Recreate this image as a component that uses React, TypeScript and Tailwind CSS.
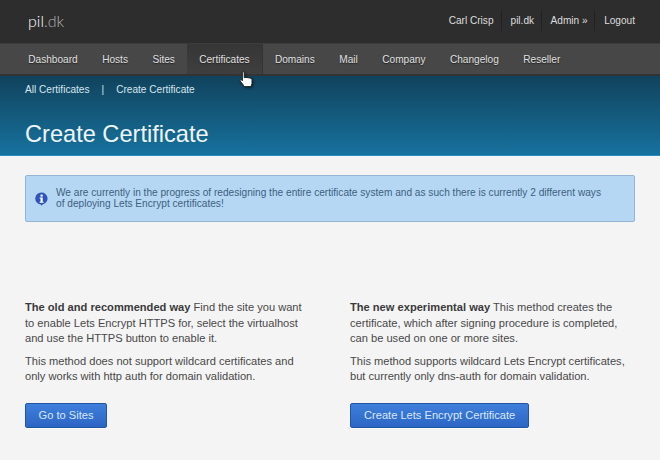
const MAIN_NAV = ["Dashboard", "Hosts", "Sites", "Certificates", "Domains", "Mail", "Company", "Changelog", "Reseller"];
const USER_NAV = ["Carl Crisp", "pil.dk", "Admin »", "Logout"];

function HandCursor() {
  return (
    <svg className="absolute left-[239px] top-[71px] drop-shadow-[1px_1px_1px_rgba(0,0,0,0.5)]" width="15" height="17" viewBox="0 0 15 17">
      <path
        d="M3.4 1.6C3.4.5 5.2.5 5.2 1.6V6.6L7 6.4 9 6.7 11 7 13 7.8V12.4L12 15.6H5L4 13.6 1.2 10C.8 9 2 8.2 2.9 9.1L3.4 9.8Z"
        fill="#fff"
        stroke="#1a1a1a"
        strokeWidth="0.9"
        strokeLinejoin="round"
      />
    </svg>
  );
}

function InfoIcon() {
  return (
    <svg width="13" height="14" viewBox="0 0 13 14" className="shrink-0">
      <path d="M6.5.5a6 6 0 0 1 1.6 11.8L6 13.8v-1.3A6 6 0 0 1 6.5.5Z" fill="#2f55b8" />
      <rect x="5.5" y="2.6" width="2.2" height="2" fill="#fff" />
      <path d="M4.6 5.6h3.1v4.2h.9v1H4.6v-1h.9V6.6h-.9Z" fill="#fff" />
    </svg>
  );
}

export default function App() {
  return (
    <div className="relative h-[460px] w-[660px] overflow-hidden bg-[#f4f4f4] font-['Liberation_Sans',Arial,sans-serif] text-[11.12px] text-[#484848]">
      <header className="flex h-[43px] items-center justify-between bg-[#2d2d2d] pb-[2px] pl-[28px] pr-[25px]">
        <div className="font-['Lato',sans-serif] text-[16px] font-light leading-none text-[#b4b4b4]">
          <span className="text-[#ffffff]">pil</span>.dk
        </div>
        <nav className="flex items-center text-[10.1px] text-[#dddddd]">
          {USER_NAV.map((item, i) => (
            <span
              key={item}
              className={
                i === 0
                  ? "flex h-[20px] items-center pr-[7px]"
                  : "flex h-[20px] items-center border-l border-[#222] pl-[9px] pr-[6.5px] last:pr-0"
              }
            >
              {item}
            </span>
          ))}
        </nav>
      </header>

      <nav className="flex h-[33px] items-stretch border-t border-[#3c3c3c] border-b-2 border-b-[#333] bg-[#474747] pl-[16px] pt-[1px] text-[10.1px] text-[#e0e0e0] [text-shadow:0_1px_1px_#222]">
        {MAIN_NAV.map((item) => (
          <span
            key={item}
            className={
              item === "Certificates"
                ? "-mt-[1px] flex items-center border-r border-[#333] bg-gradient-to-b from-[#363636] to-[#3f3f3f] px-[12px] pt-[1px]"
                : "flex items-center px-[12.25px]"
            }
          >
            {item}
          </span>
        ))}
      </nav>

      <section className="h-[80px] border-b border-[#2b8fc0] bg-gradient-to-b from-[#10435d] to-[#17729f] pl-[25px] text-white">
        <div className="flex h-[27px] items-center text-[10.1px] text-[#d7e6ee]">
          <span>All Certificates</span>
          <span className="mx-[12px]">|</span>
          <span>Create Certificate</span>
        </div>
        <h1 className="mt-[17px] text-[23.6px] leading-[28px] text-[#eef5f9]">Create Certificate</h1>
      </section>

      <main className="px-[25px] pt-[19px]">
        <div className="flex h-[47px] items-center gap-[8px] rounded-[2px] border border-[#93b5d3] bg-[#b5d7f3] pl-[9px] pr-[28px] text-[10.14px] leading-[10.5px] text-[#3d5f80]">
          <InfoIcon />
          <p>
            We are currently in the progress of redesigning the entire certificate system and as such there is currently 2 different ways of deploying Lets Encrypt certificates!
          </p>
        </div>

        <div className="mt-[78px] grid grid-cols-[285px_285px] gap-x-[40px] leading-[15.5px]">
          <div>
            <p>
              <b className="text-[#3a3a3a]">The old and recommended way</b> Find the site you want to enable Lets Encrypt HTTPS for, select the virtualhost and use the HTTPS button to enable it.
            </p>
            <p className="mt-[7px]">
              This method does not support wildcard certificates and only works with http auth for domain validation.
            </p>
            <button className="mt-[18.5px] h-[25px] rounded-[2px] border border-[#24569f] bg-gradient-to-b from-[#3f7fdc] to-[#2c66c4] px-[12.5px] text-[#d8e6fa] shadow-[0_1px_0_#fff]">
              Go to Sites
            </button>
          </div>
          <div>
            <p>
              <b className="text-[#3a3a3a]">The new experimental way</b> This method creates the certificate, which after signing procedure is completed, can be used on one or more sites.
            </p>
            <p className="mt-[7px]">
              This method supports wildcard Lets Encrypt certificates, but currently only dns-auth for domain validation.
            </p>
            <button className="mt-[18.5px] h-[25px] rounded-[2px] border border-[#24569f] bg-gradient-to-b from-[#3f7fdc] to-[#2c66c4] px-[13px] text-[#d8e6fa] shadow-[0_1px_0_#fff]">
              Create Lets Encrypt Certificate
            </button>
          </div>
        </div>
      </main>

      <HandCursor />
    </div>
  );
}
